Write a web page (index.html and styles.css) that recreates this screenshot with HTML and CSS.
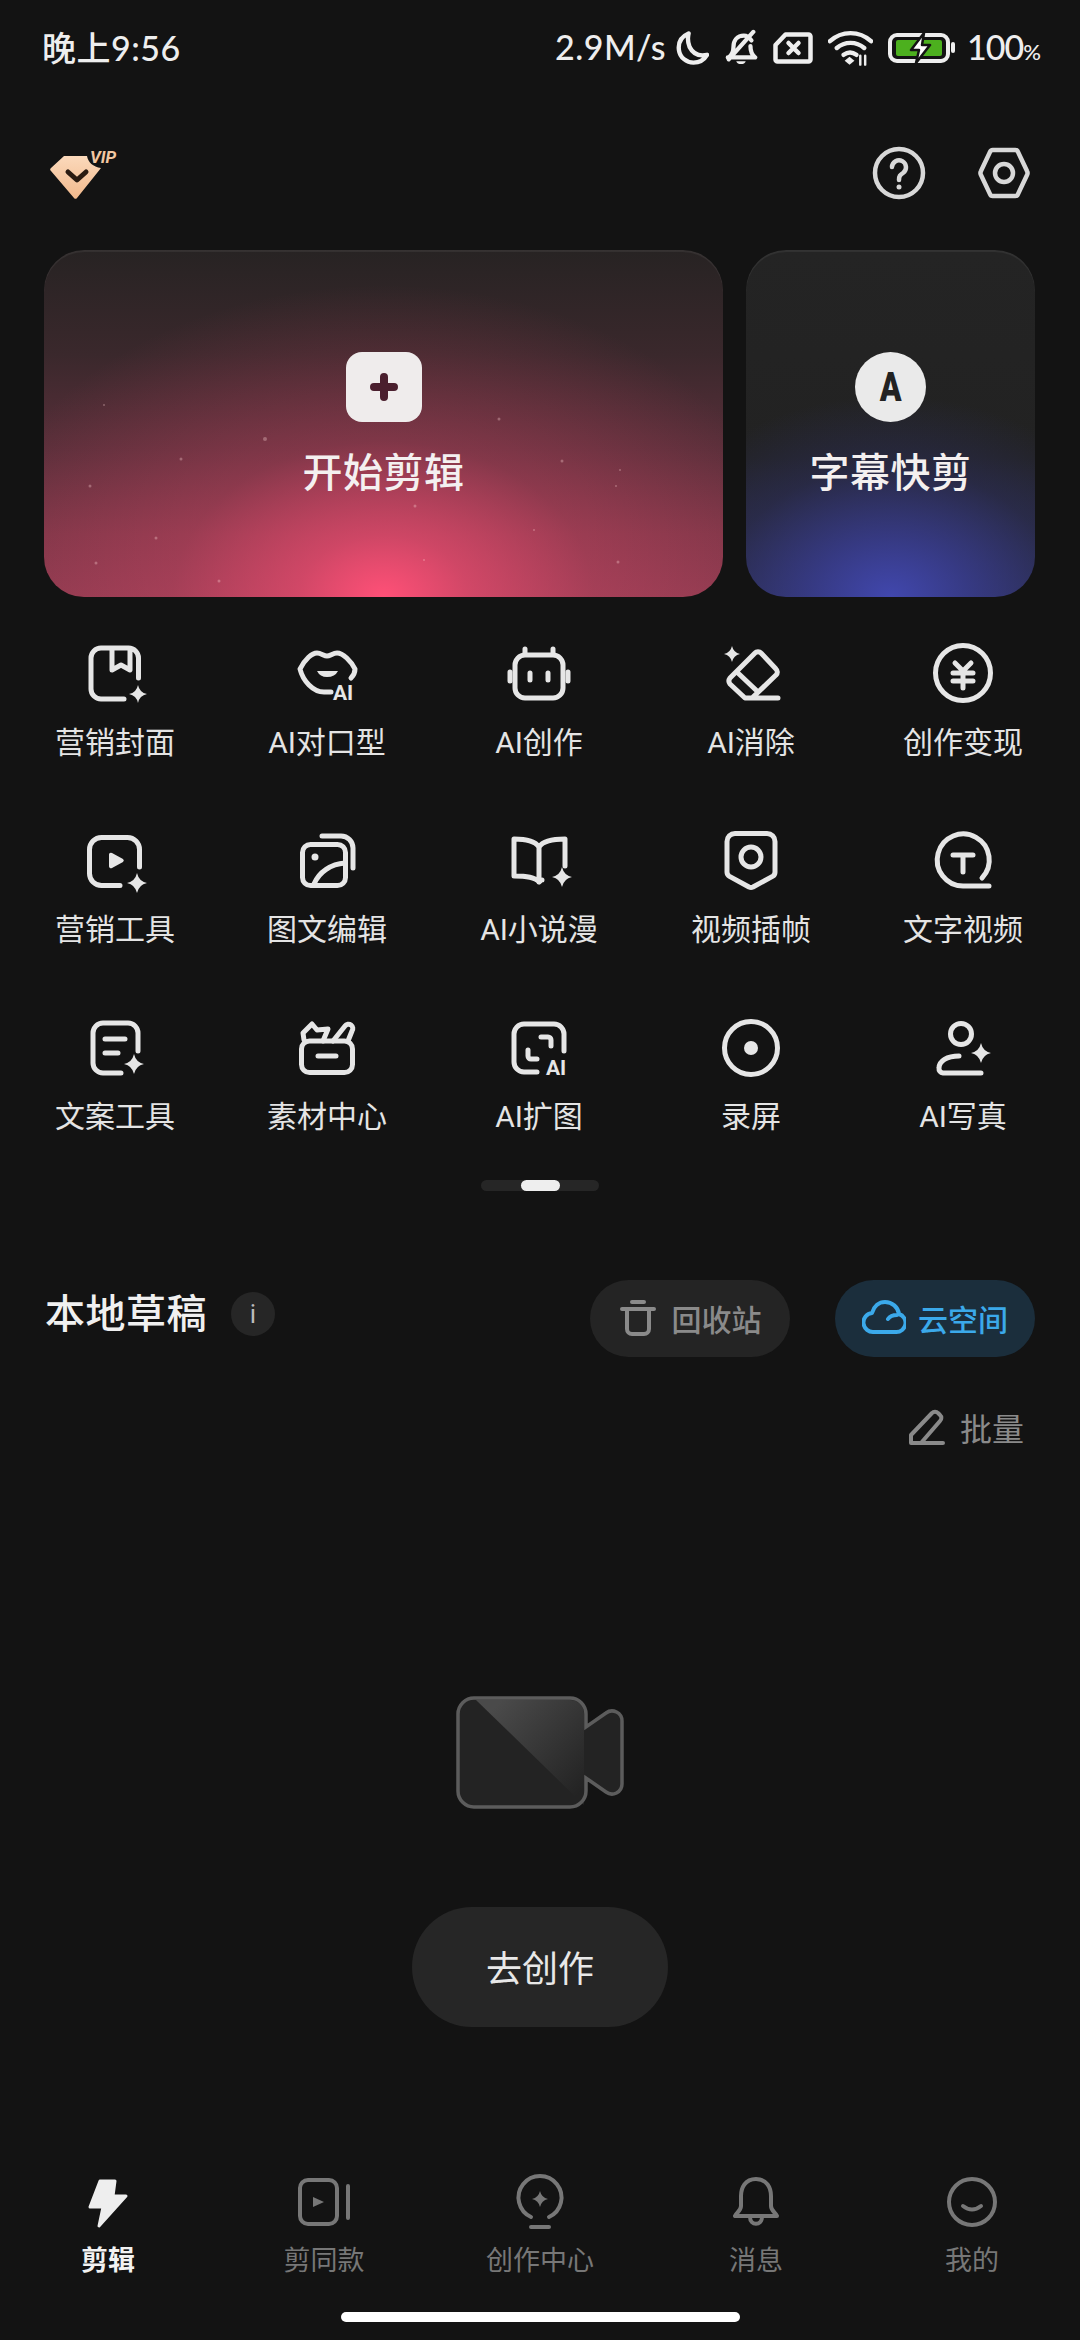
FILE: index.html
```html
<!DOCTYPE html>
<html lang="zh-CN">
<head>
    <meta charset="UTF-8">
    <meta name="viewport" content="width=device-width, initial-scale=1.0">
    <title>剪辑</title>
    <link rel="stylesheet" href="styles.css">
</head>
<body>
<div class="app">

    <!-- status bar -->
    <div class="status-bar">
        <span class="status-time">晚上9:56</span>
        <div class="status-right">
            <span class="status-speed">2.9M/s</span>
            <svg class="st-moon" width="33" height="36" viewBox="0 0 34 36"><path d="M13 3C6 6 2 12 3 20c1 8 8 13 15 13 6 0 11-3 14-8-9 2-15-2-18-8-2-5-2-10-1-14z"/></svg>
            <svg class="st-bell" width="34" height="38" viewBox="0 0 36 38"><path d="M5 29c4-3 5-6 5-11 0-7 4-12 11-12 3 0 6 2 8 5M28 17c0 5 1 9 5 12H4M5 31 31 2"/><path class="st-solid" d="M13 33h10c-1 4-9 4-10 0z"/></svg>
            <svg class="st-sim" width="40" height="32" viewBox="0 0 39 32"><path d="M12 2.500h23a2 2 0 0 1 2 2v23a2 2 0 0 1-2 2H4a2 2 0 0 1-2-2V13z"/><path d="m15 11 10 10M25 11 15 21"/></svg>
            <svg class="st-wifi" width="45" height="36" viewBox="0 0 46 36"><path d="M2 11c12-11 30-11 42 0M9 18c8-7 20-7 28 0M16 25c4-3 9-3 13 0"/><path class="st-solid" d="m22 27 5 4-5 4-5-4z"/><path class="st-thin" d="M33 26v9M38 26v9"/></svg>
            <svg class="st-batt" width="68" height="32" viewBox="0 0 68 32">
                <rect x="2" y="3" width="58" height="26" rx="7" fill="none" stroke="#eee" stroke-width="4"/>
                <rect class="st-green" x="8" y="8" width="46" height="16" rx="2"/>
                <path class="st-bolt" d="M36 1 23 18h8l-3 13 14-18h-8z"/>
                <rect class="st-solid" x="63" y="10" width="4" height="11" rx="2"/>
            </svg>
            <span class="status-pct">100<small>%</small></span>
        </div>
    </div>

    <!-- header -->
    <div class="top-bar">
        <svg class="vip-logo" width="70" height="60" viewBox="0 0 70 60">
            <defs><linearGradient id="vipFill" x1="0" y1="0" x2="0" y2="1"><stop offset="0" stop-color="#fbd9bb"/><stop offset="1" stop-color="#f2b98c"/></linearGradient></defs>
            <path d="M14 13h23c1 6 6 11 14 12L27 55a2 2 0 0 1-3 0L1 28a2 2 0 0 1 0-3z" fill="url(#vipFill)"/>
            <path d="m18 29 9 8 9-8" fill="none" stroke="#2b1c12" stroke-width="5" stroke-linecap="round" stroke-linejoin="round"/>
            <text class="vip-text" x="40" y="20">VIP</text>
        </svg>
        <div class="top-actions">
            <svg class="top-icon" width="60" height="60" viewBox="0 0 60 60"><circle cx="30" cy="30" r="24"/><path d="M23 24a7 7 0 1 1 11 6c-3 2-4 3-4 7"/><circle class="dot" cx="30" cy="44" r="2.500"/></svg>
            <svg class="top-icon" width="60" height="60" viewBox="0 0 60 60"><path d="M19 7h22a3 3 0 0 1 3 2l9 19a4 4 0 0 1 0 4l-9 19a3 3 0 0 1-3 2H19a3 3 0 0 1-3-2L7 32a4 4 0 0 1 0-4l9-19a3 3 0 0 1 3-2z"/><circle cx="30" cy="30" r="9"/></svg>
        </div>
    </div>

    <!-- two main cards -->
    <div class="cards">
        <div class="card card-edit">
            <svg class="stars" width="679" height="347" viewBox="0 0 679 347">
                <circle cx="221" cy="189" r="2"/><circle cx="137" cy="209" r="1.500"/><circle cx="46" cy="236" r="1.500"/><circle cx="371" cy="256" r="1.500"/><circle cx="518" cy="211" r="1.500"/><circle cx="455" cy="169" r="1.500"/><circle cx="112" cy="288" r="1.500"/><circle cx="52" cy="313" r="1.500"/><circle cx="175" cy="331" r="1.500"/><circle cx="574" cy="312" r="1.500"/><circle cx="572" cy="236" r="1"/><circle cx="576" cy="220" r="1"/><circle cx="60" cy="155" r="1"/><circle cx="490" cy="280" r="1"/><circle cx="380" cy="310" r="1"/>
            </svg>
            <div class="card-btn btn-square">
                <svg width="30" height="30" viewBox="0 0 30 30"><path d="M15 5v20M5 15h20"/></svg>
            </div>
            <div class="card-title">开始剪辑</div>
        </div>
        <div class="card card-caption">
            <div class="card-btn btn-round"><span>A</span></div>
            <div class="card-title">字幕快剪</div>
        </div>
    </div>

    <!-- tools -->
    <div class="tools">
        <div class="tool">
            <svg class="tool-icon" width="64" height="64" viewBox="0 0 64 64"><path d="M55.500 37V17a10 10 0 0 0-10-10H18A10 10 0 0 0 8 17v31a10 10 0 0 0 10 10h23M29 8v21l9-5 9 5V8"/><path class="fill" d="M55 44q1.500 7.500 9 9-7.500 1.500-9 9-1.500-7.500-9-9 7.500-1.500 9-9z"/></svg>
            <div class="tool-name">营销封面</div>
        </div>
        <div class="tool">
            <svg class="tool-icon" width="64" height="64" viewBox="0 0 64 64"><path d="M36 51h-7C18 51 8 40 5 28c5-10 12-16 17-16 4 0 7 3 10 3s6-3 10-3c6 0 14 8 18 16 0 3-2 7-4 9"/><path class="fill" d="M22 30h21q-3 6-11 6-7 0-10-6z"/><text class="ai-mark" x="38" y="59">AI</text></svg>
            <div class="tool-name">AI对口型</div>
        </div>
        <div class="tool">
            <svg class="tool-icon" width="64" height="64" viewBox="0 0 64 64"><rect x="8" y="14" width="48" height="43" rx="10"/><path d="M18 13V8M46 13V8M23 32v7M41 32v7M3 31v9M61 31v9"/></svg>
            <div class="tool-name">AI创作</div>
        </div>
        <div class="tool">
            <svg class="tool-icon" width="64" height="64" viewBox="0 0 64 64"><path d="M42 12l15 16a4 4 0 0 1 0 6L33 57h-7L11 43a5 5 0 0 1 0-6l25-25a4 4 0 0 1 6 0zM20 33l18 17M30 57h29"/><path class="fill" d="M13 5q1.500 6.500 8 8-6.500 1.500-8 8-1.500-6.500-8-8 6.500-1.500 8-8z"/></svg>
            <div class="tool-name">AI消除</div>
        </div>
        <div class="tool">
            <svg class="tool-icon" width="64" height="64" viewBox="0 0 64 64"><circle cx="32" cy="32" r="27.500"/><path d="m24 22 8 8 8-8M22 32h20M22 40h20M32 30v17"/></svg>
            <div class="tool-name">创作变现</div>
        </div>

        <div class="tool">
            <svg class="tool-icon" width="64" height="64" viewBox="0 0 64 64"><path d="M56.500 39V21.500a12 12 0 0 0-12-12h-26a12 12 0 0 0-12 12v24a12 12 0 0 0 12 12H37"/><path class="fill" d="M26 27a2 2 0 0 1 3-2l11 6a2 2 0 0 1 0 3l-11 6a2 2 0 0 1-3-2z"/><path class="fill" d="M54 45q1.800 8.200 10 10-8.200 1.800-10 10-1.800-8.200-10-10 8.200-1.800 10-10z"/></svg>
            <div class="tool-name">营销工具</div>
        </div>
        <div class="tool">
            <svg class="tool-icon" width="64" height="64" viewBox="0 0 64 64"><rect x="7.500" y="16.500" width="43" height="41" rx="8"/><path d="M27 8h19a12 12 0 0 1 12 12v20M19 56c5-12 17-20 31-21"/><circle class="fill" cx="20" cy="29" r="3.500"/></svg>
            <div class="tool-name">图文编辑</div>
        </div>
        <div class="tool">
            <svg class="tool-icon" width="64" height="64" viewBox="0 0 64 64"><path d="M32 19c-4-6-12-8-25-8v37c13 0 21 1 25 6 1-1 2-2 3-2M32 19c4-6 12-8 26-8v27M32 19v35"/><path class="fill" d="M55 39q1.800 8.200 10 10-8.200 1.800-10 10-1.800-8.200-10-10 8.200-1.800 10-10z"/></svg>
            <div class="tool-name">AI小说漫</div>
        </div>
        <div class="tool">
            <svg class="tool-icon" width="64" height="64" viewBox="0 0 64 64"><path d="M16 5.500h32a8 8 0 0 1 8 8V44a5 5 0 0 1-2.500 4.400L34 59a5 5 0 0 1-4 0L10.500 48.400A5 5 0 0 1 8 44V13.500a8 8 0 0 1 8-8z"/><circle cx="32" cy="29" r="10"/></svg>
            <div class="tool-name">视频插帧</div>
        </div>
        <div class="tool">
            <svg class="tool-icon" width="64" height="64" viewBox="0 0 64 64"><path d="M32 58a26 26 0 1 1 19-8M32 58h26M22 27h20M32 27v17"/></svg>
            <div class="tool-name">文字视频</div>
        </div>

        <div class="tool">
            <svg class="tool-icon" width="64" height="64" viewBox="0 0 64 64"><path d="M55 36V18A10 10 0 0 0 45 8H20a10 10 0 0 0-10 10v30a10 10 0 0 0 10 10h18M22 24h20M22 38h13"/><path class="fill" d="M51 39q1.800 8.200 10 10-8.200 1.800-10 10-1.800-8.200-10-10 8.200-1.800 10-10z"/></svg>
            <div class="tool-name">文案工具</div>
        </div>
        <div class="tool">
            <svg class="tool-icon" width="64" height="64" viewBox="0 0 64 64"><rect x="6.500" y="26" width="51" height="31.500" rx="8"/><path d="M9 25l-1-7 9-9 5 6 11-1-5 12M38 26l12-15a4 4 0 0 1 7 5l-4 10M23 41h18"/></svg>
            <div class="tool-name">素材中心</div>
        </div>
        <div class="tool">
            <svg class="tool-icon" width="64" height="64" viewBox="0 0 64 64"><path d="M57 36V19A10 10 0 0 0 47 9H17A10 10 0 0 0 7 19v28a10 10 0 0 0 10 10h13M21 35v6a3 3 0 0 0 3 3h6M34 22h7a3 3 0 0 1 3 3v6"/><text class="ai-mark" x="39" y="60">AI</text></svg>
            <div class="tool-name">AI扩图</div>
        </div>
        <div class="tool">
            <svg class="tool-icon" width="64" height="64" viewBox="0 0 64 64"><circle cx="32" cy="33" r="26.500"/><circle class="fill" cx="32" cy="33" r="7"/></svg>
            <div class="tool-name">录屏</div>
        </div>
        <div class="tool">
            <svg class="tool-icon" width="64" height="64" viewBox="0 0 64 64"><circle cx="30" cy="19" r="10.500"/><path d="M28 41C16 41 8 46 8 53a4.500 4.500 0 0 0 4 5h38"/><path class="fill" d="M50 28q1.800 8.200 10 10-8.200 1.800-10 10-1.800-8.200-10-10 8.200-1.800 10-10z"/></svg>
            <div class="tool-name">AI写真</div>
        </div>
    </div>

    <div class="pager"><div class="pager-thumb"></div></div>

    <!-- drafts -->
    <div class="drafts-head">
        <div class="drafts-title">
            <h2>本地草稿</h2>
            <span class="info-dot">i</span>
        </div>
        <div class="drafts-actions">
            <div class="pill pill-trash">
                <svg width="38" height="38" viewBox="0 0 38 38"><path d="M3 10h32M13 3h12M8 10v20a5 5 0 0 0 5 5h12a5 5 0 0 0 5-5V10"/></svg>
                <span>回收站</span>
            </div>
            <div class="pill pill-cloud">
                <svg width="44" height="38" viewBox="0 0 44 38"><path d="M12 33a9.500 9.500 0 0 1-2-19C12 7 17 3 23 3c7 0 13 5 14 12a9.200 9.200 0 0 1-3 18zM26 20c2-3 6-4 9-4"/></svg>
                <span>云空间</span>
            </div>
        </div>
    </div>

    <div class="batch-row">
        <svg width="38" height="38" viewBox="0 0 38 38"><path d="M3 35h32M3 35v-8L24 5a4 4 0 0 1 6 0l2 2a4 4 0 0 1 0 6L13 35"/></svg>
        <span>批量</span>
    </div>

    <!-- empty state -->
    <div class="empty">
        <svg width="168" height="113" viewBox="0 0 168 113">
            <defs><linearGradient id="camShine" gradientUnits="userSpaceOnUse" x1="40" y1="10" x2="130" y2="90"><stop offset="0" stop-color="#4a4a4a"/><stop offset="1" stop-color="#232323"/></linearGradient></defs>
            <path class="cam-body" d="M18 2h96a16 16 0 0 1 16 16v13l20-14a10 10 0 0 1 16 8v63a10 10 0 0 1-16 8l-20-14v13a16 16 0 0 1-16 16H18A16 16 0 0 1 2 95V18A16 16 0 0 1 18 2z"/>
            <path fill="url(#camShine)" d="M20 4h94a14 14 0 0 1 14 14v91z"/>
            <path class="cam-line" d="M18 2h96a16 16 0 0 1 16 16v13l20-14a10 10 0 0 1 16 8v63a10 10 0 0 1-16 8l-20-14v13a16 16 0 0 1-16 16H18A16 16 0 0 1 2 95V18A16 16 0 0 1 18 2z"/>
        </svg>
        <div class="create-btn">去创作</div>
    </div>

    <!-- bottom nav -->
    <div class="nav">
        <div class="nav-item active">
            <svg width="60" height="60" viewBox="0 0 60 60"><path class="fill" d="M22 10h15l-2 15h13L21 55l4-19H12z"/></svg>
            <span>剪辑</span>
        </div>
        <div class="nav-item">
            <svg width="60" height="60" viewBox="0 0 60 60"><rect x="6" y="9" width="37" height="44" rx="8"/><path d="M54 15v32"/><path class="fill" d="M19 26l11 5-11 5z"/></svg>
            <span>剪同款</span>
        </div>
        <div class="nav-item">
            <svg width="60" height="60" viewBox="0 0 60 60"><path d="M21 46a21.500 21.500 0 1 1 18 0M21 56h18"/><path class="fill" d="M30 20q1.500 6.500 8 8-6.500 1.500-8 8-1.500-6.500-8-8 6.500-1.500 8-8z"/></svg>
            <span>创作中心</span>
        </div>
        <div class="nav-item">
            <svg width="60" height="60" viewBox="0 0 60 60"><path d="M30 8c-11 0-15 9-15 17v10c0 5-5 7-6 10h42c-1-3-6-5-6-10V25c0-8-4-17-15-17zM24 46c0 9 12 9 12 0"/></svg>
            <span>消息</span>
        </div>
        <div class="nav-item">
            <svg width="60" height="60" viewBox="0 0 60 60"><circle cx="30" cy="31" r="23"/><path d="M21 35q9 7 18 0"/></svg>
            <span>我的</span>
        </div>
    </div>

    <div class="home-bar"></div>
</div>
</body>
</html>
```
FILE: styles.css
```css
* {
    box-sizing: border-box;
}

body {
    margin: 0;
    background-color: #131313;
    font-family: Roboto, "Noto Sans CJK SC", sans-serif;
    color: #e8e8e8;
}

.app {
    width: 1080px;
    height: 2340px;
    display: flex;
    flex-direction: column;
    overflow: hidden;
}

/* status bar */
.status-bar {
    height: 96px;
    padding: 0 40px 0 42px;
    display: flex;
    justify-content: space-between;
    align-items: center;
    font-family: Lato, "Noto Sans CJK SC", sans-serif;
    font-size: 34px;
    font-weight: 500;
    color: #eee;
}

.status-time {
    margin-bottom: 3px;
    letter-spacing: 0.5px;
}

.status-right {
    display: flex;
    align-items: center;
    gap: 15px;
}

.status-speed {
    margin-bottom: 3px;
    letter-spacing: 0.5px;
}

.status-pct {
    margin-left: -4px;
    margin-bottom: 3px;
    letter-spacing: -1px;
}

.status-right svg {
    fill: none;
    stroke: #eee;
    stroke-width: 4.500;
    stroke-linecap: round;
    stroke-linejoin: round;
}

.status-right .st-moon {
    margin-left: -5px;
}

.status-right .st-solid {
    fill: #eee;
    stroke: none;
}

.status-right .st-thin {
    stroke-width: 2.500;
}

.status-right .st-green {
    fill: #4cb01e;
    stroke: none;
}

.status-right .st-bolt {
    fill: #fff;
    stroke: #131313;
    stroke-width: 2.500;
}

.status-pct small {
    font-size: 22px;
}

/* header */
.top-bar {
    height: 60px;
    margin-top: 47px;
    padding: 0 46px 0 50px;
    display: flex;
    justify-content: space-between;
}

.vip-text {
    font-family: Roboto, sans-serif;
    font-size: 17px;
    font-style: italic;
    font-weight: 700;
    fill: #f2c7a2;
}

.top-actions {
    display: flex;
    gap: 45px;
}

.top-icon {
    fill: none;
    stroke: #d8d8d8;
    stroke-width: 4.500;
    stroke-linecap: round;
}

.top-icon .dot {
    fill: #d8d8d8;
    stroke: none;
}

/* main cards */
.cards {
    height: 347px;
    margin-top: 47px;
    padding: 0 45px 0 44px;
    display: flex;
    gap: 23px;
}

.card {
    position: relative;
    border-radius: 40px;
    padding-top: 102px;
    display: flex;
    flex-direction: column;
    align-items: center;
    overflow: hidden;
    box-shadow: inset 0 2px 1px rgba(255, 255, 255, 0.07);
}

.card-edit {
    width: 679px;
    background:
        radial-gradient(ellipse 62% 90% at 50% 100%, #ff5077 0%, rgba(255, 80, 119, 0.62) 20%, rgba(255, 80, 119, 0.24) 50%, rgba(255, 80, 119, 0) 100%),
        linear-gradient(180deg, #272323 0%, #3a282c 30%, #5a2f3a 58%, #7c3647 82%, #8a3a4e 100%);
}

.card-caption {
    width: 289px;
    background:
        radial-gradient(ellipse 90% 58% at 50% 100%, #4147ad 0%, rgba(58, 62, 150, 0.78) 30%, rgba(48, 50, 110, 0.4) 65%, rgba(40, 42, 80, 0) 100%),
        linear-gradient(180deg, #242424 0%, #222 60%, #2a2c45 100%);
}

.stars {
    position: absolute;
    left: 0;
    top: 0;
    fill: rgba(255, 215, 215, 0.33);
}

.card-btn {
    position: relative;
    height: 70px;
    background-color: #efecec;
    display: flex;
    justify-content: center;
    align-items: center;
}

.btn-square {
    width: 76px;
    border-radius: 16px;
}

.btn-square svg {
    fill: none;
    stroke: #4a1f2e;
    stroke-width: 8;
    stroke-linecap: round;
}

.btn-round {
    width: 71px;
    border-radius: 50%;
    background-color: #eaeaea;
    font-size: 40px;
    font-weight: 900;
    color: #222;
}

.btn-round span {
    transform: scaleX(0.8);
}

.card-title {
    position: relative;
    margin-top: 27px;
    font-size: 40px;
    line-height: 50px;
    font-weight: 500;
    letter-spacing: 0.5px;
    color: #f4f0f0;
}

/* tool grid */
.tools {
    margin-top: 44px;
    padding: 0 11px 0 9px;
    display: grid;
    grid-template-columns: repeat(5, 212px);
    row-gap: 65px;
}

.tool {
    display: flex;
    flex-direction: column;
    align-items: center;
}

.tool-icon {
    overflow: visible;
    fill: none;
    stroke: #e6e6e6;
    stroke-width: 5;
    stroke-linecap: round;
    stroke-linejoin: round;
}

.tool-icon .fill {
    fill: #e6e6e6;
    stroke: none;
}

.ai-mark {
    font-family: Roboto, sans-serif;
    font-size: 21px;
    font-weight: 700;
    fill: #e6e6e6;
    stroke: none;
}

.tool-name {
    margin-top: 18px;
    font-size: 30px;
    line-height: 40px;
    white-space: nowrap;
    color: #e4e4e4;
}

.pager {
    width: 118px;
    height: 11px;
    margin: 43px auto 0;
    padding-left: 40px;
    border-radius: 6px;
    background-color: #262626;
}

.pager-thumb {
    width: 39px;
    height: 11px;
    border-radius: 6px;
    background-color: #eee;
}

/* drafts */
.drafts-head {
    height: 77px;
    margin-top: 89px;
    padding: 0 45px;
    display: flex;
    justify-content: space-between;
}

.drafts-title {
    display: flex;
    align-items: center;
    gap: 24px;
    padding-bottom: 10px;
}

.drafts-title h2 {
    margin: 2px 0 0;
    font-size: 40px;
    line-height: 56px;
    font-weight: 500;
    letter-spacing: 0.5px;
    color: #f0f0f0;
}

.info-dot {
    width: 44px;
    height: 44px;
    border-radius: 50%;
    background-color: #262626;
    text-align: center;
    font-size: 26px;
    line-height: 44px;
    color: #bbb;
}

.drafts-actions {
    display: flex;
    gap: 45px;
}

.pill {
    width: 200px;
    padding-bottom: 2px;
    border-radius: 39px;
    display: flex;
    justify-content: center;
    align-items: center;
    gap: 12px;
    font-size: 30px;
    font-weight: 500;
}

.pill-trash {
    gap: 15px;
    background-color: #242424;
    color: #8a8a8a;
}

.pill svg {
    fill: none;
    stroke: currentColor;
    stroke-width: 4;
    stroke-linecap: round;
    stroke-linejoin: round;
}

.pill-cloud {
    background-color: #1b2e3c;
    color: #3ba9ea;
}

.batch-row {
    height: 44px;
    margin-top: 48px;
    padding-right: 56px;
    display: flex;
    justify-content: flex-end;
    align-items: center;
    gap: 14px;
    font-size: 32px;
    color: #8a8a8a;
}

.batch-row svg {
    fill: none;
    stroke: #8a8a8a;
    stroke-width: 4;
    stroke-linecap: round;
    stroke-linejoin: round;
}

/* empty state */
.empty {
    margin-top: 247px;
    display: flex;
    flex-direction: column;
    align-items: center;
}

.cam-body {
    fill: #232323;
}

.cam-line {
    fill: none;
    stroke: #5c5c5c;
    stroke-width: 3.500;
}

.create-btn {
    width: 256px;
    height: 120px;
    margin-top: 98px;
    padding-top: 3px;
    border-radius: 60px;
    background-color: #262626;
    text-align: center;
    font-size: 36px;
    line-height: 120px;
    color: #e8e8e8;
}

/* bottom nav */
.nav {
    margin-top: 144px;
    display: grid;
    grid-template-columns: repeat(5, 216px);
}

.nav-item {
    display: flex;
    flex-direction: column;
    align-items: center;
    gap: 12px;
    font-size: 27px;
    line-height: 36px;
    color: #777;
}

.nav-item svg {
    fill: none;
    stroke: #777;
    stroke-width: 4;
    stroke-linecap: round;
    stroke-linejoin: round;
}

.nav-item .fill {
    fill: #777;
    stroke: none;
}

.nav-item.active {
    color: #f2f2f2;
    font-weight: 700;
}

.nav-item.active .fill {
    fill: #eee;
    stroke: #eee;
    stroke-width: 3;
}

.home-bar {
    width: 399px;
    height: 10px;
    margin: 33px auto 0;
    border-radius: 5px;
    background-color: #fff;
}
```
